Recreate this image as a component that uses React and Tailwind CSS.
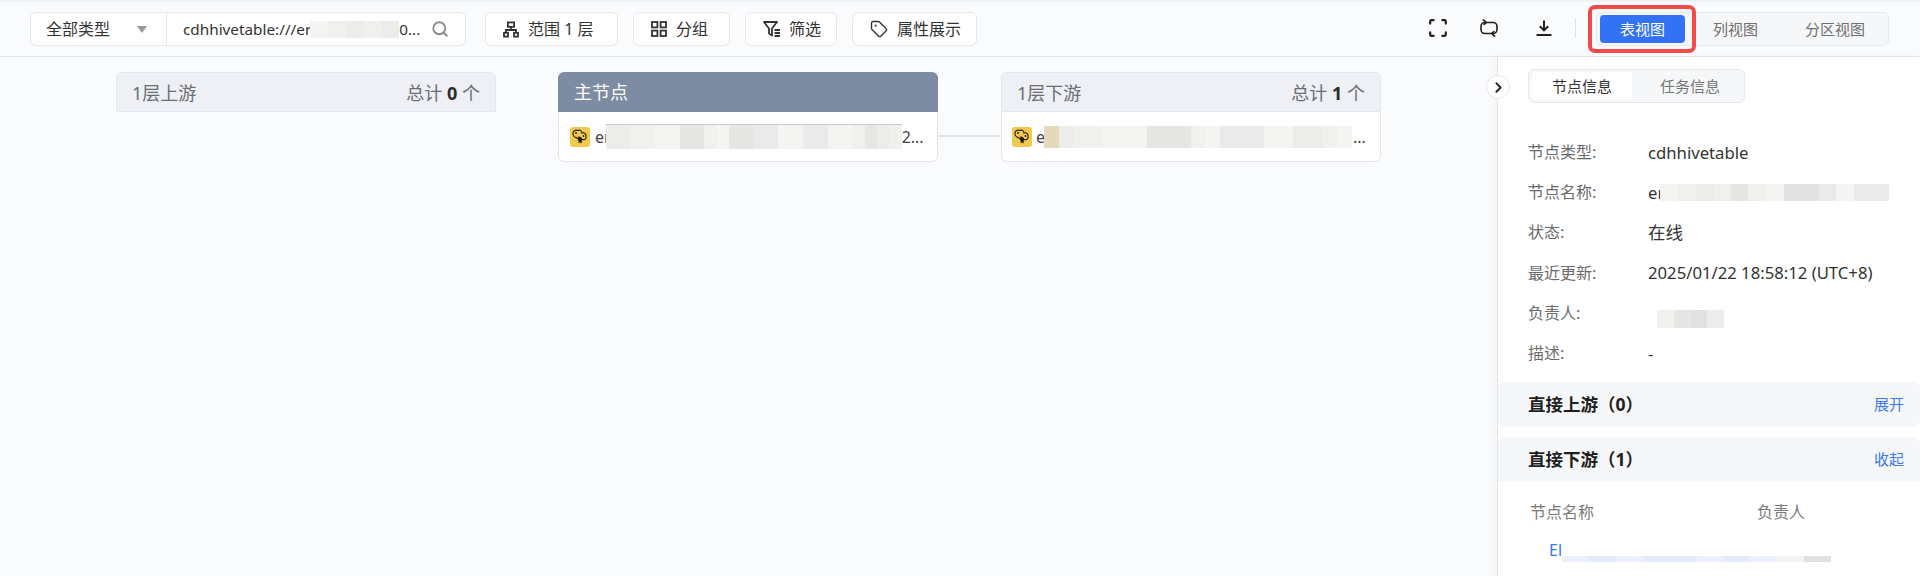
import React from "react";
import { Search, Tag, ChevronRight } from "lucide-react";

const FONT = "font-['Noto_Sans','Noto_Sans_CJK_SC',sans-serif]";

function Mosaic({ cells, className }) {
  return (
    <span className={"flex shrink-0 " + className}>
      {cells.map((c, i) => (
        <span key={i} className={"flex-1 " + c} />
      ))}
    </span>
  );
}

const g1 = "bg-[#ececeb]";
const g2 = "bg-[#f0f0ef]";
const g3 = "bg-[#e6e6e5]";
const g4 = "bg-[#f4f4f3]";
const g5 = "bg-[#e1e1e1]";
const g6 = "bg-[#eaeaea]";

function HiveIcon() {
  return (
    <svg width="20" height="20" viewBox="0 0 20 20" className="shrink-0">
      <rect width="20" height="20" rx="3" fill="#f0c94e" />
      <path d="M3 6 C3 3.5 6 2.5 8 3.5 C10 2.5 12 4 12 6 C14 5 16.5 7 16 9.5 C16.5 12 14.5 13 13 12.5 C11 13 7 12 6.5 10.5 C4.5 10.5 3 8.5 3 6 Z" fill="none" stroke="#1c1a10" strokeWidth="1.1" />
      <path d="M8.5 9 L12 11 L11.5 16.5 L9.5 15 L9 17 L8.2 12.5 Z" fill="#1c1a10" />
      <circle cx="6" cy="6" r="0.9" fill="#1c1a10" />
      <circle cx="13.5" cy="9" r="0.9" fill="#1c1a10" />
    </svg>
  );
}

function HierarchyIcon() {
  return (
    <svg width="16" height="17" viewBox="0 0 16 17" fill="none" stroke="#333" strokeWidth="1.8" className="shrink-0">
      <rect x="4.9" y="1.4" width="6.2" height="4.4" />
      <path d="M8 5.8V9M3 11.5V9H13V11.5" />
      <rect x="1" y="11.8" width="4" height="3.8" />
      <rect x="11" y="11.8" width="4" height="3.8" />
    </svg>
  );
}

function GridIcon() {
  return (
    <svg width="16" height="16" viewBox="0 0 16 16" fill="none" stroke="#333" strokeWidth="1.8" className="shrink-0">
      <rect x="1" y="1" width="5.4" height="5.4" />
      <rect x="9.6" y="1" width="5.4" height="5.4" />
      <rect x="1" y="9.6" width="5.4" height="5.4" />
      <rect x="9.6" y="9.6" width="5.4" height="5.4" />
    </svg>
  );
}

function FilterIcon() {
  return (
    <svg width="18" height="16" viewBox="0 0 18 16" fill="none" stroke="#333" strokeWidth="1.8" className="shrink-0">
      <path d="M1 1H14L9 7.5V14.5L6 12.5V7.5Z" strokeLinejoin="round" />
      <path d="M11.5 9H17M11.5 12H17M11.5 15H17" />
    </svg>
  );
}

function FullscreenIcon() {
  return (
    <svg width="18" height="18" viewBox="0 0 18 18" fill="none" stroke="#1f1f1f" strokeWidth="2.2" strokeLinecap="round" strokeLinejoin="round">
      <path d="M1.2 4.6V2.4Q1.2 1.2 2.4 1.2H4.6M13.4 1.2H15.6Q16.8 1.2 16.8 2.4V4.6M16.8 13.4V15.6Q16.8 16.8 15.6 16.8H13.4M4.6 16.8H2.4Q1.2 16.8 1.2 15.6V13.4" />
    </svg>
  );
}

function CycleIcon() {
  return (
    <svg width="18" height="18" viewBox="0 0 18 18" fill="none" stroke="#1f1f1f" strokeWidth="1.6" strokeLinecap="round" strokeLinejoin="round">
      <rect x="1" y="3.5" width="16" height="11" rx="4" />
      <path d="M3.4 0.9L6.4 3.5L4.2 5.4" />
      <path d="M14.6 17.1L11.6 14.5L13.8 12.6" />
    </svg>
  );
}

function DownloadIcon() {
  return (
    <svg width="16" height="16" viewBox="0 0 16 16" fill="none" stroke="#1f1f1f" strokeWidth="2">
      <path d="M8 0.5V10M3.8 6.2L8 10.4L12.2 6.2" />
      <path d="M0.5 15H15.5" />
    </svg>
  );
}

function ToolButton({ icon, children, w, gap }) {
  return (
    <button className={"flex h-[34px] items-center justify-start rounded-[6px] border border-[#e4e7ec] bg-white pl-[17px] text-[16px] text-[#333] " + w + " " + gap}>
      {icon}
      <span>{children}</span>
    </button>
  );
}

function Row({ label, children }) {
  return (
    <div className="flex h-[40.2px] items-center">
      <span className="w-[120px] shrink-0 text-[16px] text-[#6b6b6b]">{label}</span>
      <div className="text-[16.7px] text-[#333]">{children}</div>
    </div>
  );
}

function SideColumn({ title, count }) {
  return (
    <div className="flex h-[40px] items-center justify-between rounded-t-[6px] border border-[#e3e6ec] bg-[#eef0f5] pl-[15px] pr-[15px] pt-[2px] text-[18px] text-[#6b6e73]">
      <span>{title}</span>
      <span>
        总计 <b className="font-bold text-[#2c2c2c]">{count}</b> 个
      </span>
    </div>
  );
}

function Card({ children }) {
  return (
    <div className="flex h-[50px] items-center rounded-b-[6px] border border-t-0 border-[#e4e6ea] bg-white text-[16px] text-[#444]">
      {children}
    </div>
  );
}

function Section({ title, action, rounded }) {
  return (
    <div className={"flex h-[44.5px] items-center justify-between bg-[#f6f7f9] pl-[30px] pr-[16px] " + rounded}>
      <span className="text-[17.5px] font-bold text-[#1f1f1f]">{title}</span>
      <span className="text-[15px] text-[#3b78f0]">{action}</span>
    </div>
  );
}

export default function App() {
  return (
    <div className={"flex h-[576px] w-[1920px] flex-col overflow-hidden bg-[#fafbfd] " + FONT}>
      <div className="h-[2px] shrink-0 bg-[#f0f1f3]" />
      <header className="flex h-[55px] shrink-0 items-start border-b border-[#e4e6ea] pl-[30px] pt-[10px]">
        <div className="flex h-[34px] w-[436px] rounded-[6px] border border-[#e4e7ec] bg-white">
          <div className="flex w-[136px] shrink-0 items-center justify-between border-r border-[#e4e7ec] pl-[15px] pr-[19px] text-[16px] text-[#333]">
            <span>全部类型</span>
            <span className="h-0 w-0 border-x-[5px] border-t-[7px] border-x-transparent border-t-[#999]" />
          </div>
          <div className="flex flex-1 items-center pl-[16px] text-[15.3px] text-[#333]">
            <span>cdhhivetable:///er</span>
            <Mosaic className="-ml-[1px] h-[17px] w-[89px]" cells={[g4, g2, g1, g2, g1]} />
            <span>0...</span>
            <Search size={18} strokeWidth={2.4} className="ml-[11px] text-[#8a8a8a]" />
          </div>
        </div>
        <div className="ml-[19px] flex gap-[15px]">
          <ToolButton w="w-[133px]" gap="gap-[9px]" icon={<HierarchyIcon />}>范围 1 层</ToolButton>
          <ToolButton w="w-[97px]" gap="gap-[9px]" icon={<GridIcon />}>分组</ToolButton>
          <ToolButton w="w-[92px]" gap="gap-[8px]" icon={<FilterIcon />}>筛选</ToolButton>
          <ToolButton w="w-[125px]" gap="gap-[9px]" icon={<Tag size={18} strokeWidth={1.8} className="text-[#333]" />}>属性展示</ToolButton>
        </div>
        <div className="ml-auto flex items-center pt-[6px]">
          <FullscreenIcon />
          <span className="ml-[33px]"><CycleIcon /></span>
          <span className="ml-[38px]"><DownloadIcon /></span>
          <span className="ml-[23px] h-[20px] w-px bg-[#e0e2e6]" />
        </div>
        <div className="relative ml-[20px] mr-[31px] flex h-[34px] w-[293px] items-center rounded-[6px] border border-[#e6e8ec] bg-[#f6f7f9] pl-[3px] text-[15px] text-[#6f6f6f]">
          <span className="flex h-[28px] w-[85px] items-center justify-center rounded-[4px] bg-[#3273f6] text-white">表视图</span>
          <span className="ml-[28px]">列视图</span>
          <span className="ml-[47px]">分区视图</span>
          <span className="absolute -left-[9px] -top-[8px] h-[48px] w-[108px] rounded-[7px] border-[4px] border-[#f44a4a]" />
        </div>
      </header>
      <main className="flex min-h-0 flex-1">
        <section className="flex flex-1 items-start pl-[116px] pt-[15px]">
          <div className="w-[380px]">
            <SideColumn title="1层上游" count="0" />
          </div>
          <div className="ml-[62px] w-[380px]">
            <div className="flex h-[40px] items-center rounded-t-[6px] bg-[#7d8ca3] pl-[16px] pt-[1px] text-[18px] text-white">主节点</div>
            <Card>
              <span className="ml-[11px]"><HiveIcon /></span>
              <span className="ml-[5px]">er</span>
              <Mosaic className="-ml-[5px] h-[25px] w-[296px] border-t border-[#c8cbd0]" cells={[g1, g1, g2, g2, g4, g4, g3, g3, g2, g4, g3, g3, g6, g6, g4, g4, g6, g6, g4, g4, g2, g3, g1, g2]} />
              <span>2...</span>
            </Card>
          </div>
          <div className="mt-[63px] h-[2px] w-[63px] bg-[#e4e5e8]" />
          <div className="w-[380px]">
            <SideColumn title="1层下游" count="1" />
            <Card>
              <span className="ml-[10px]"><HiveIcon /></span>
              <span className="ml-[4px]">e</span>
              <Mosaic className="-ml-[1px] h-[22px] w-[308px]" cells={["bg-[#e4d8bd]", g1, g2, g2, g4, g4, g4, g3, g3, g3, g2, g4, g6, g6, g6, g4, g4, g1, g1, g2, g4]} />
              <span className="ml-[1px]">...</span>
            </Card>
          </div>
        </section>
        <aside className="relative w-[423px] shrink-0 border-l border-[#e4e6ea] bg-white shadow-[-4px_0_8px_rgba(0,0,0,0.03)]">
          <button className="absolute -left-[12px] top-[18px] flex h-[24px] w-[24px] items-center justify-center rounded-full border border-[#e4e6ea] bg-white text-[#222]">
            <ChevronRight size={17} strokeWidth={2.6} />
          </button>
          <div className="ml-[30px] mt-[12px] flex h-[34px] w-[217px] items-center rounded-[6px] border border-[#e6e8ec] bg-[#f6f7f9] pl-[3px] text-[15px]">
            <span className="flex h-[28px] w-[100px] items-center justify-center rounded-[4px] bg-white text-[#333]">节点信息</span>
            <span className="ml-[28px] text-[#777]">任务信息</span>
          </div>
          <div className="ml-[30px] mt-[29px]">
            <Row label="节点类型:">cdhhivetable</Row>
            <Row label="节点名称:">
              <span className="flex items-center">er<Mosaic className="-ml-[4px] h-[17px] w-[229px]" cells={[g4, g2, g1, g2, g3, g2, g4, g5, g5, g6, g4, g6, g6]} /></span>
            </Row>
            <Row label="状态:"><span className="text-[17.5px]">在线</span></Row>
            <Row label="最近更新:">2025/01/22 18:58:12 (UTC+8)</Row>
            <Row label="负责人:">
              <Mosaic className="ml-[9px] mt-[12px] h-[18px] w-[67px]" cells={[g2, g3, g5, g1]} />
            </Row>
            <Row label="描述:">-</Row>
          </div>
          <div className="mt-[9px]">
            <Section title="直接上游（0）" action="展开" rounded="rounded-[6px]" />
          </div>
          <div className="mt-[10px]">
            <Section title="直接下游（1）" action="收起" rounded="rounded-t-[6px]" />
          </div>
          <div className="mt-[19px] flex h-[24px] items-center pl-[32px] text-[16px] text-[#7a7a7a]">
            <span className="w-[227px]">节点名称</span>
            <span>负责人</span>
          </div>
          <div className="ml-[51px] mt-[14px] flex h-[24px] items-center text-[16px] text-[#3b78f0]">
            <span>El</span>
            <Mosaic className="mt-[18px] h-[6px] w-[269px]" cells={["bg-[#ebf0fc]", "bg-[#e4ebfb]", "bg-[#ebf0fc]", "bg-[#e4ebfb]", "bg-[#e4ebfb]", "bg-[#ebf0fc]", "bg-[#e4ebfb]", "bg-[#ebf0fc]", "bg-[#f4f4f4]", g5]} />
          </div>
        </aside>
      </main>
    </div>
  );
}
